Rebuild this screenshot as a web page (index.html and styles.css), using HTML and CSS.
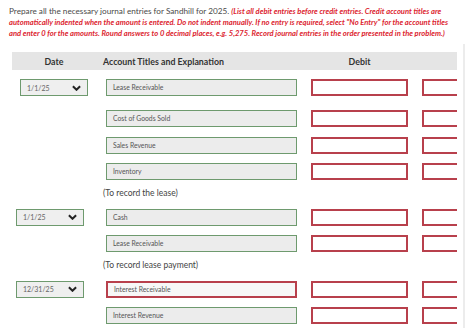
FILE: index.html
```html
<!DOCTYPE html>
<html lang="en">
<head>
    <meta charset="utf-8">
    <link rel="stylesheet" href="styles.css">
</head>
<body>
    <p class="intro">
        Prepare all the necessary journal entries for Sandhill for 2025. <em class="hint">(List all debit entries before credit entries. Credit account titles are<br>
        automatically indented when the amount is entered. Do not indent manually. If no entry is required, select "No Entry" for the account titles<br>
        and enter 0 for the amounts. Round answers to 0 decimal places, e.g. 5,275. Record journal entries in the order presented in the problem.)</em>
    </p>

    <div class="panel">
        <div class="sheet">
            <div class="grid head">
                <div class="h-date">Date</div>
                <div class="h-acct">Account Titles and Explanation</div>
                <div class="h-num">Debit</div>
                <div class="h-num"></div>
            </div>

            <div class="grid row first">
                <div class="date-sel"><span>1/1/25</span><svg viewBox="0 0 10 6"><polyline points="1,1 5,5 9,1"/></svg></div>
                <div class="field">Lease Receivable</div>
                <div class="amount"></div>
                <div class="amount"></div>
            </div>
            <div class="grid row extra">
                <div></div>
                <div class="field">Cost of Goods Sold</div>
                <div class="amount"></div>
                <div class="amount"></div>
            </div>
            <div class="grid row">
                <div></div>
                <div class="field">Sales Revenue</div>
                <div class="amount"></div>
                <div class="amount"></div>
            </div>
            <div class="grid row">
                <div></div>
                <div class="field">Inventory</div>
                <div class="amount"></div>
                <div class="amount"></div>
            </div>
            <div class="note">(To record the lease)</div>

            <div class="grid row">
                <div class="date-sel alt"><span>1/1/25</span><svg viewBox="0 0 10 6"><polyline points="1,1 5,5 9,1"/></svg></div>
                <div class="field">Cash</div>
                <div class="amount"></div>
                <div class="amount"></div>
            </div>
            <div class="grid row">
                <div></div>
                <div class="field">Lease Receivable</div>
                <div class="amount"></div>
                <div class="amount"></div>
            </div>
            <div class="note">(To record lease payment)</div>

            <div class="grid row">
                <div class="date-sel alt"><span>12/31/25</span><svg viewBox="0 0 10 6"><polyline points="1,1 5,5 9,1"/></svg></div>
                <div class="field wrong">Interest Receivable</div>
                <div class="amount"></div>
                <div class="amount"></div>
            </div>
            <div class="grid row">
                <div></div>
                <div class="field">Interest Revenue</div>
                <div class="amount"></div>
                <div class="amount"></div>
            </div>
        </div>
    </div>
</body>
</html>
```

FILE: styles.css
```css
* {
    margin: 0;
    padding: 0;
    box-sizing: border-box;
}
body {
    background: #fff;
    font-family: Lato, "Open Sans", sans-serif;
    color: #444;
    overflow: hidden;
}
.intro {
    font-size: 8.2px;
    line-height: 11px;
    padding: 6px 0 0 9px;
    white-space: nowrap;
    color: #4a4a4a;
}
.hint {
    font-size: 7.6px;
    color: #dc2530;
    font-weight: bold;
    font-style: italic;
}
.panel {
    margin-top: 5px;
    width: 465px;
    height: 300px;
    padding: 8px 8px 0 12px;
    border-right: 2px solid #ececec;
}
.sheet {
    width: 445px;
    overflow: hidden;
}
.grid {
    display: grid;
    grid-template-columns: 80px 191px 97px 97px;
    column-gap: 14px;
}
.head {
    height: 18px;
    background: #e5e5e5;
    align-items: center;
    font-size: 8.8px;
    font-weight: bold;
    color: #333;
}
.h-date {
    text-align: center;
    padding-left: 4px;
}
.h-acct {
    margin-left: -3px;
}
.h-num {
    text-align: center;
}
.row {
    height: 17px;
    margin-top: 9.5px;
}
.row.first {
    margin-top: 9px;
}
.row.extra {
    margin-top: 14px;
}
.date-sel {
    margin-left: 8px;
    width: 68px;
    height: 17px;
    border: 1.5px solid #6e9a6e;
    background: #efefef;
    display: flex;
    align-items: center;
    justify-content: space-between;
    padding: 0 6px 0 6px;
    font-size: 7px;
    color: #666;
}
.date-sel.alt {
    margin-left: 4px;
}
.date-sel svg {
    width: 9px;
    height: 6px;
    fill: none;
    stroke: #222;
    stroke-width: 2.2;
}
.field {
    height: 17px;
    border: 1.5px solid #6e9a6e;
    background: #ececec;
    font-size: 6.8px;
    line-height: 14px;
    padding-left: 6px;
    color: #555;
}
.field.wrong {
    border: 2px solid #b8404c;
    background: #f7f7f7;
    line-height: 13px;
}
.amount {
    height: 17px;
    border: 2px solid #b8404c;
    background: #fff;
}
.note {
    height: 12px;
    margin-top: 7px;
    margin-left: 91px;
    font-size: 8.5px;
    line-height: 12px;
    color: #444;
}
```
